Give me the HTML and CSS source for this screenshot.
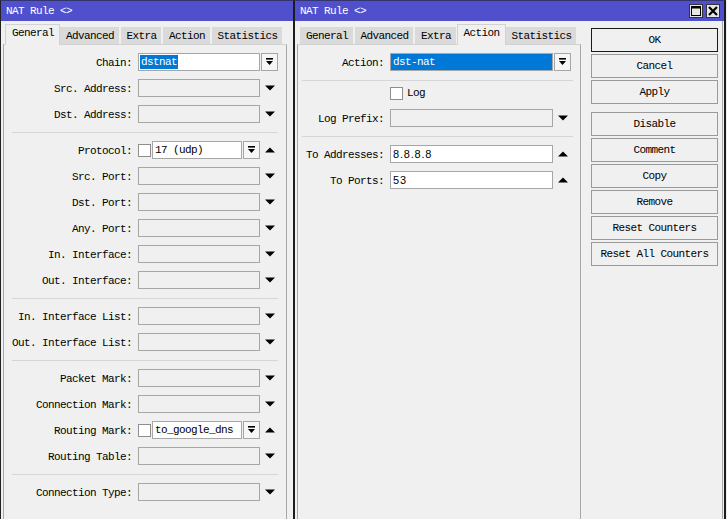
FILE: index.html
```html
<!DOCTYPE html>
<html>
<head>
<meta charset="utf-8">
<link rel="stylesheet" href="styles.css">
</head>
<body>
<div class="desk">
  <!-- LEFT WINDOW -->
  <div class="win win-left">
    <div class="titlebar"><span class="title">NAT Rule &lt;&gt;</span></div>
    <div class="lbody">
      <div class="tabs">
        <div class="tab active first">General</div>
        <div class="tab">Advanced</div>
        <div class="tab">Extra</div>
        <div class="tab">Action</div>
        <div class="tab">Statistics</div>
      </div>
      <div class="panel panel-l">
        <div class="row"><span class="lbl">Chain:</span><div class="ctl"><div class="inp val w122"><span class="sel">dstnat</span></div><div class="dd"><svg width="9" height="8" viewBox="0 0 9 8"><rect x="1" y="0" width="7" height="1.6"/><path d="M1 3h7L4.5 7z"/></svg></div></div></div>
        <div class="row"><span class="lbl">Src. Address:</span><div class="ctl"><div class="inp w122"></div><div class="arr"><svg width="10" height="6" viewBox="0 0 10 6"><path d="M0 0.5h10L5 5.5z"/></svg></div></div></div>
        <div class="row"><span class="lbl">Dst. Address:</span><div class="ctl"><div class="inp w122"></div><div class="arr"><svg width="10" height="6" viewBox="0 0 10 6"><path d="M0 0.5h10L5 5.5z"/></svg></div></div></div>
        <div class="sep"></div>
        <div class="row"><span class="lbl">Protocol:</span><div class="ctl"><div class="chk"></div><div class="inp val w90">17 (udp)</div><div class="dd"><svg width="9" height="8" viewBox="0 0 9 8"><rect x="1" y="0" width="7" height="1.6"/><path d="M1 3h7L4.5 7z"/></svg></div><div class="arr"><svg width="10" height="6" viewBox="0 0 10 6"><path d="M0 5.5h10L5 0.5z"/></svg></div></div></div>
        <div class="row"><span class="lbl">Src. Port:</span><div class="ctl"><div class="inp w122"></div><div class="arr"><svg width="10" height="6" viewBox="0 0 10 6"><path d="M0 0.5h10L5 5.5z"/></svg></div></div></div>
        <div class="row"><span class="lbl">Dst. Port:</span><div class="ctl"><div class="inp w122"></div><div class="arr"><svg width="10" height="6" viewBox="0 0 10 6"><path d="M0 0.5h10L5 5.5z"/></svg></div></div></div>
        <div class="row"><span class="lbl">Any. Port:</span><div class="ctl"><div class="inp w122"></div><div class="arr"><svg width="10" height="6" viewBox="0 0 10 6"><path d="M0 0.5h10L5 5.5z"/></svg></div></div></div>
        <div class="row"><span class="lbl">In. Interface:</span><div class="ctl"><div class="inp w122"></div><div class="arr"><svg width="10" height="6" viewBox="0 0 10 6"><path d="M0 0.5h10L5 5.5z"/></svg></div></div></div>
        <div class="row"><span class="lbl">Out. Interface:</span><div class="ctl"><div class="inp w122"></div><div class="arr"><svg width="10" height="6" viewBox="0 0 10 6"><path d="M0 0.5h10L5 5.5z"/></svg></div></div></div>
        <div class="sep"></div>
        <div class="row"><span class="lbl">In. Interface List:</span><div class="ctl"><div class="inp w122"></div><div class="arr"><svg width="10" height="6" viewBox="0 0 10 6"><path d="M0 0.5h10L5 5.5z"/></svg></div></div></div>
        <div class="row"><span class="lbl">Out. Interface List:</span><div class="ctl"><div class="inp w122"></div><div class="arr"><svg width="10" height="6" viewBox="0 0 10 6"><path d="M0 0.5h10L5 5.5z"/></svg></div></div></div>
        <div class="sep"></div>
        <div class="row"><span class="lbl">Packet Mark:</span><div class="ctl"><div class="inp w122"></div><div class="arr"><svg width="10" height="6" viewBox="0 0 10 6"><path d="M0 0.5h10L5 5.5z"/></svg></div></div></div>
        <div class="row"><span class="lbl">Connection Mark:</span><div class="ctl"><div class="inp w122"></div><div class="arr"><svg width="10" height="6" viewBox="0 0 10 6"><path d="M0 0.5h10L5 5.5z"/></svg></div></div></div>
        <div class="row"><span class="lbl">Routing Mark:</span><div class="ctl"><div class="chk"></div><div class="inp val w90">to_google_dns</div><div class="dd"><svg width="9" height="8" viewBox="0 0 9 8"><rect x="1" y="0" width="7" height="1.6"/><path d="M1 3h7L4.5 7z"/></svg></div><div class="arr"><svg width="10" height="6" viewBox="0 0 10 6"><path d="M0 5.5h10L5 0.5z"/></svg></div></div></div>
        <div class="row"><span class="lbl">Routing Table:</span><div class="ctl"><div class="inp w122"></div><div class="arr"><svg width="10" height="6" viewBox="0 0 10 6"><path d="M0 0.5h10L5 5.5z"/></svg></div></div></div>
        <div class="sep"></div>
        <div class="row"><span class="lbl">Connection Type:</span><div class="ctl"><div class="inp w122"></div><div class="arr"><svg width="10" height="6" viewBox="0 0 10 6"><path d="M0 0.5h10L5 5.5z"/></svg></div></div></div>
      </div>
    </div>
  </div>

  <!-- RIGHT WINDOW -->
  <div class="win win-right">
    <div class="titlebar">
      <span class="title">NAT Rule &lt;&gt;</span>
      <div class="tbtns">
        <div class="tbtn"><svg width="12" height="12" viewBox="0 0 12 12"><rect x="1.5" y="1.5" width="9" height="9" fill="none" stroke="#000" stroke-width="1"/><rect x="1" y="1" width="10" height="2.5"/></svg></div>
        <div class="tbtn"><svg width="12" height="12" viewBox="0 0 12 12"><path d="M2 2L10 10M10 2L2 10" stroke="#000" stroke-width="2.2"/></svg></div>
      </div>
    </div>
    <div class="rbody">
      <div class="rleft">
        <div class="tabs">
          <div class="tab">General</div>
          <div class="tab">Advanced</div>
          <div class="tab">Extra</div>
          <div class="tab active">Action</div>
          <div class="tab">Statistics</div>
        </div>
        <div class="panel panel-r">
          <div class="row"><span class="lbl">Action:</span><div class="ctl"><div class="inp full w163">dst-nat</div><div class="dd"><svg width="9" height="8" viewBox="0 0 9 8"><rect x="1" y="0" width="7" height="1.6"/><path d="M1 3h7L4.5 7z"/></svg></div></div></div>
          <div class="sep"></div>
          <div class="row row-log"><span class="lbl"></span><div class="ctl"><div class="chk"></div><span class="chk-lbl">Log</span></div></div>
          <div class="row"><span class="lbl">Log Prefix:</span><div class="ctl"><div class="inp w163"></div><div class="arr"><svg width="10" height="6" viewBox="0 0 10 6"><path d="M0 0.5h10L5 5.5z"/></svg></div></div></div>
          <div class="sep"></div>
          <div class="row"><span class="lbl">To Addresses:</span><div class="ctl"><div class="inp val sans w163">8.8.8.8</div><div class="arr"><svg width="10" height="6" viewBox="0 0 10 6"><path d="M0 5.5h10L5 0.5z"/></svg></div></div></div>
          <div class="row"><span class="lbl">To Ports:</span><div class="ctl"><div class="inp val sans w163">53</div><div class="arr"><svg width="10" height="6" viewBox="0 0 10 6"><path d="M0 5.5h10L5 0.5z"/></svg></div></div></div>
        </div>
      </div>
      <div class="btns">
        <div class="btn ok">OK</div>
        <div class="btn">Cancel</div>
        <div class="btn">Apply</div>
        <div class="bgap"></div>
        <div class="btn">Disable</div>
        <div class="btn">Comment</div>
        <div class="btn">Copy</div>
        <div class="btn">Remove</div>
        <div class="btn">Reset Counters</div>
        <div class="btn">Reset All Counters</div>
      </div>
    </div>
  </div>
</div>
</body>
</html>
```

FILE: styles.css
```css
html, body {
  margin: 0;
  padding: 0;
}
body {
  width: 727px;
  height: 519px;
  overflow: hidden;
  background: #f0f0f0;
  font-family: "Liberation Mono", "DejaVu Sans Mono", monospace;
  font-size: 11px;
  letter-spacing: -0.6px;
  color: #000;
}
.desk {
  display: flex;
  height: 519px;
}
.win {
  box-sizing: border-box;
  height: 519px;
  display: flex;
  flex-direction: column;
  background: #f0f0f0;
  border-top: 1px solid #34346e;
  flex: none;
}
.win-left {
  width: 293px;
  border-left: 1px solid #222;
}
.win-right {
  width: 433px;
  border-left: 2px solid #1c1c1c;
  border-right: 2px solid #1c1c1c;
}
.titlebar {
  height: 20px;
  background: #5050cd;
  color: #fff;
  display: flex;
  align-items: center;
  padding-left: 5px;
  flex: none;
}
.title {
  line-height: 20px;
}
.tbtns {
  margin-left: auto;
  display: flex;
  gap: 3px;
  padding-right: 4px;
}
.tbtn {
  box-sizing: border-box;
  width: 14px;
  height: 14px;
  background: #e6e6e6;
  border: 1px solid #333;
  display: flex;
  align-items: center;
  justify-content: center;
}
.tbtn svg {
  display: block;
}

/* left window body */
.lbody {
  flex: 1;
  display: flex;
  flex-direction: column;
  padding: 0 2px;
  min-height: 0;
}
.rbody {
  flex: 1;
  display: flex;
  padding-left: 2px;
  min-height: 0;
  border-right: 1px solid #a8a8a8;
  margin-right: 1px;
}
.rleft {
  width: 284px;
  display: flex;
  flex-direction: column;
  flex: none;
}

/* tabs */
.tabs {
  height: 23px;
  display: flex;
  align-items: flex-end;
  padding-left: 3px;
  flex: none;
  position: relative;
  z-index: 1;
}
.tab {
  box-sizing: border-box;
  height: 17px;
  line-height: 16px;
  padding: 0 3.5px 0 5px;
  margin-right: 2px;
  background: #dadada;
  border: 1px solid #dadada;
  border-bottom: none;
  white-space: nowrap;
}
.tab.active {
  height: 21px;
  line-height: 17px;
  background: #f0f0f0;
  border: 1px solid #d2d2d2;
  border-bottom: none;
  margin-left: -1px;
  margin-right: 0;
  padding: 0 5px 0 6px;
  margin-bottom: -1px;
}

/* panel */
.panel {
  flex: 1;
  box-sizing: border-box;
  width: 284px;
  border: 1px solid #a8a8a8;
  border-top-color: #d2d2d2;
  border-bottom: none;
  padding-top: 4px;
}
.row {
  height: 26px;
  display: flex;
  align-items: center;
}
.lbl {
  flex: none;
  text-align: right;
  white-space: nowrap;
  margin-right: 6px;
  padding-top: 1px;
}
.panel-l .lbl {
  width: 128px;
}
.panel-r .lbl {
  width: 86px;
}
.ctl {
  display: flex;
  align-items: center;
}
.inp {
  box-sizing: border-box;
  height: 18px;
  line-height: 16px;
  border: 1px solid #a6a6a6;
  background: #f0f0f0;
  padding-left: 2px;
  white-space: nowrap;
  overflow: hidden;
  flex: none;
}
.inp.val {
  background: #fff;
}
.inp.full {
  background: #0078d7;
  color: #fff;
  padding-left: 2px;
}
.inp.sans {
  font-family: "Liberation Sans", Arial, sans-serif;
  font-size: 11px;
  letter-spacing: 0.8px;
}
.w122 { width: 122px; padding-left: 1px; }
.w90 { width: 90px; }
.w163 { width: 163px; }
.sel {
  display: inline-block;
  background: #0078d7;
  color: #fff;
  line-height: 14px;
  padding: 0 1px;
  vertical-align: top;
  margin-top: 1px;
}
.dd {
  box-sizing: border-box;
  width: 17px;
  height: 18px;
  margin-left: 1px;
  border: 1px solid #a6a6a6;
  background: #f6f6f6;
  display: flex;
  align-items: center;
  justify-content: center;
  flex: none;
}
.dd svg, .arr svg {
  display: block;
}
.arr {
  width: 17px;
  height: 18px;
  margin-left: 1px;
  display: flex;
  align-items: center;
  justify-content: center;
  flex: none;
}
.chk {
  box-sizing: border-box;
  width: 13px;
  height: 13px;
  border: 1px solid #8e8e8e;
  background: #fff;
  margin-right: 1px;
  flex: none;
}
.row-log {
  height: 20px;
  align-items: flex-start;
}
.row-log .ctl {
  padding-top: 2px;
}
.chk-lbl {
  margin-left: 3px;
  line-height: 13px;
}
.sep {
  height: 10px;
  display: flex;
  align-items: center;
}
.sep::before {
  content: "";
  display: block;
  flex: 1;
  height: 1px;
  background: #d6d6d6;
}
.panel-l .sep {
  margin: 0 8px 0 8px;
}
.panel-r .sep {
  margin: 0 7px 0 4px;
}

/* buttons */
.btns {
  margin-left: 10px;
  padding-top: 7px;
  display: flex;
  flex-direction: column;
  width: 127px;
  flex: none;
}
.btn {
  box-sizing: border-box;
  width: 127px;
  height: 24px;
  line-height: 22px;
  margin-bottom: 2px;
  border: 1px solid #9a9a9a;
  background: #f0f0f0;
  text-align: center;
  white-space: nowrap;
}
.btn.ok {
  border-color: #1a1a1a;
}
.bgap {
  height: 6px;
}
```
